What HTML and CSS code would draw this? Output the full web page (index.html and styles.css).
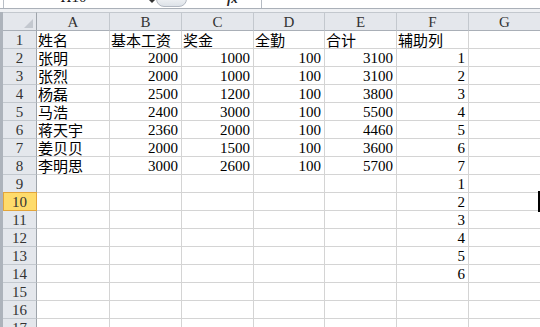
FILE: index.html
```html
<!DOCTYPE html>
<html lang="zh-CN">
<head>
<meta charset="utf-8">
<title>Sheet</title>
<link rel="stylesheet" href="styles.css">
</head>
<body>
<div class="app">
  <div class="fbar">
    <div class="namebox"><span>H10</span></div>
    <div class="arrow"></div>
    <div class="pill"></div>
    <div class="fx">fx</div>
    <div class="finput"></div>
  </div>
  <div class="band"></div>
  <div class="sheet">
    <div class="corner"><svg width="9" height="9" viewBox="0 0 9 9"><polygon points="9,0 9,9 0,9" fill="#c3c8cf"/></svg></div>
    <div class="ch">A</div><div class="ch">B</div><div class="ch">C</div><div class="ch">D</div><div class="ch">E</div><div class="ch">F</div><div class="ch">G</div>

    <div class="rh">1</div><div class="c t">姓名</div><div class="c t">基本工资</div><div class="c t">奖金</div><div class="c t">全勤</div><div class="c t">合计</div><div class="c t">辅助列</div><div class="c"></div>
    <div class="rh">2</div><div class="c t">张明</div><div class="c n">2000</div><div class="c n">1000</div><div class="c n">100</div><div class="c n">3100</div><div class="c n">1</div><div class="c"></div>
    <div class="rh">3</div><div class="c t">张烈</div><div class="c n">2000</div><div class="c n">1000</div><div class="c n">100</div><div class="c n">3100</div><div class="c n">2</div><div class="c"></div>
    <div class="rh">4</div><div class="c t">杨磊</div><div class="c n">2500</div><div class="c n">1200</div><div class="c n">100</div><div class="c n">3800</div><div class="c n">3</div><div class="c"></div>
    <div class="rh">5</div><div class="c t">马浩</div><div class="c n">2400</div><div class="c n">3000</div><div class="c n">100</div><div class="c n">5500</div><div class="c n">4</div><div class="c"></div>
    <div class="rh">6</div><div class="c t">蒋天宇</div><div class="c n">2360</div><div class="c n">2000</div><div class="c n">100</div><div class="c n">4460</div><div class="c n">5</div><div class="c"></div>
    <div class="rh">7</div><div class="c t">姜贝贝</div><div class="c n">2000</div><div class="c n">1500</div><div class="c n">100</div><div class="c n">3600</div><div class="c n">6</div><div class="c"></div>
    <div class="rh">8</div><div class="c t">李明思</div><div class="c n">3000</div><div class="c n">2600</div><div class="c n">100</div><div class="c n">5700</div><div class="c n">7</div><div class="c"></div>
    <div class="rh">9</div><div class="c"></div><div class="c"></div><div class="c"></div><div class="c"></div><div class="c"></div><div class="c n">1</div><div class="c"></div>
    <div class="rh sel">10</div><div class="c"></div><div class="c"></div><div class="c"></div><div class="c"></div><div class="c"></div><div class="c n">2</div><div class="c"></div>
    <div class="rh">11</div><div class="c"></div><div class="c"></div><div class="c"></div><div class="c"></div><div class="c"></div><div class="c n">3</div><div class="c"></div>
    <div class="rh">12</div><div class="c"></div><div class="c"></div><div class="c"></div><div class="c"></div><div class="c"></div><div class="c n">4</div><div class="c"></div>
    <div class="rh">13</div><div class="c"></div><div class="c"></div><div class="c"></div><div class="c"></div><div class="c"></div><div class="c n">5</div><div class="c"></div>
    <div class="rh">14</div><div class="c"></div><div class="c"></div><div class="c"></div><div class="c"></div><div class="c"></div><div class="c n">6</div><div class="c"></div>
    <div class="rh">15</div><div class="c"></div><div class="c"></div><div class="c"></div><div class="c"></div><div class="c"></div><div class="c"></div><div class="c"></div>
    <div class="rh">16</div><div class="c"></div><div class="c"></div><div class="c"></div><div class="c"></div><div class="c"></div><div class="c"></div><div class="c"></div>
    <div class="rh">17</div><div class="c"></div><div class="c"></div><div class="c"></div><div class="c"></div><div class="c"></div><div class="c"></div><div class="c"></div>
  </div>
  <div class="active"></div>
</div>
</body>
</html>
```
FILE: styles.css
```css
* { box-sizing: border-box; margin: 0; padding: 0; }
html, body { margin: 0; background: #fff; }
body { width: 540px; height: 327px; overflow: hidden; font-family: "Noto Sans CJK SC", sans-serif; color: #000; }

.app { position: relative; width: 540px; height: 327px; overflow: hidden; }

.fbar {
  height: 9px;
  border-bottom: 1px solid #aab0b8;
  display: flex;
  align-items: flex-start;
  overflow: hidden;
  background: #fff;
}
.namebox {
  width: 140px;
  margin-left: 3px;
  height: 8px;
  border-left: 1px solid #b9bfc7;
  text-align: center;
  overflow: hidden;
}
.namebox span {
  display: block;
  font-family: "Liberation Serif", serif;
  font-size: 15px;
  line-height: 15px;
  margin-top: -10px;
  color: #111;
}
.arrow {
  width: 0; height: 0;
  margin-left: 6px;
  margin-top: 0;
  border-left: 3px solid transparent;
  border-right: 3px solid transparent;
  border-top: 3px solid #333;
}
.pill {
  width: 31px;
  height: 16px;
  margin-left: 1px;
  margin-top: -9px;
  border: 1px solid #b3b9c2;
  border-radius: 9px;
  background: linear-gradient(#ffffff, #dde2e8);
}
.fx {
  margin-left: 40px;
  font-family: "Liberation Serif", serif;
  font-style: italic;
  font-weight: bold;
  font-size: 13px;
  line-height: 13px;
  margin-top: -8px;
  color: #222;
  width: 34px;
}
.finput {
  height: 8px;
  flex: 1;
  border-left: 1px solid #b5bbc3;
}

.band { height: 3px; background: #eef0f3; }

.sheet {
  display: grid;
  grid-template-columns: 34px 73px 72px 72px 71px 72px 72px 72px;
  grid-template-rows: 19px repeat(17, 18px);
  border-left: 3px solid #adb3bb;
  width: 541px;
}

.corner, .ch {
  background: #e4e7ec;
  border-top: 1px solid #c3c8ce;
  border-bottom: 1px solid #a9afb7;
  border-right: 1px solid #c3c8ce;
}
.corner {
  display: flex;
  align-items: flex-end;
  justify-content: flex-end;
  padding: 0 3px 2px 0;
  border-right-color: #9ea4ab;
}
.ch {
  display: flex;
  align-items: center;
  justify-content: center;
  font-family: "Liberation Serif", serif;
  font-size: 15px;
  line-height: 17px;
  color: #333;
  padding-top: 1px;
}

.rh {
  background: #e4e7ec;
  border-right: 1px solid #9ea4ab;
  border-bottom: 1px solid #c3c8ce;
  display: flex;
  align-items: flex-end;
  justify-content: center;
  font-family: "Liberation Serif", serif;
  font-size: 15px;
  line-height: 14px;
  padding-bottom: 1px;
  color: #333;
}
.rh.sel {
  background: #fedb6b;
  border-right-color: #e3a53a;
  border-bottom-color: #e3a53a;
  box-shadow: 0 -1px 0 #e3a53a, inset 1px 0 0 #e3a53a;
}

.c {
  border-right: 1px solid #d4d4d4;
  border-bottom: 1px solid #d4d4d4;
  display: flex;
  align-items: flex-end;
  white-space: nowrap;
}
.t {
  font-size: 15px;
  line-height: 15px;
  padding-left: 1px;
  padding-bottom: 1px;
}
.n {
  justify-content: flex-end;
  font-family: "Liberation Serif", serif;
  font-size: 15px;
  line-height: 14px;
  padding-right: 3px;
  padding-bottom: 1px;
}

.active {
  position: absolute;
  left: 538px;
  top: 191px;
  width: 2px;
  height: 21px;
  background: #000;
}
```
